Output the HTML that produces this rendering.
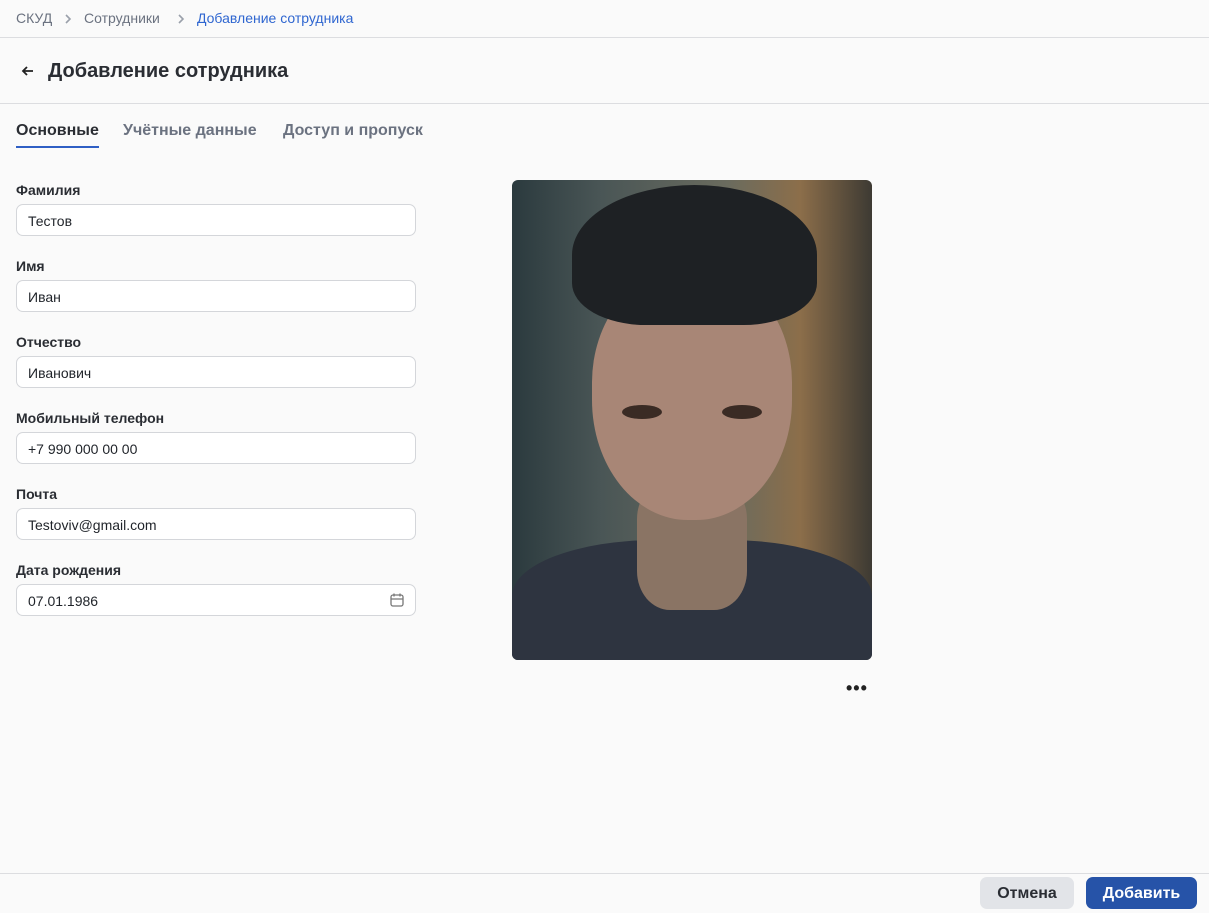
<!DOCTYPE html>
<html><head><meta charset="utf-8"><style>
*{box-sizing:border-box;margin:0;padding:0}
body{width:1209px;height:913px;background:#fafafa;font-family:"Liberation Sans","DejaVu Sans",sans-serif;position:relative;overflow:hidden;color:#1f2329}
.bc{position:absolute;top:10px;font-size:14px;color:#6b7280}
.hl{position:absolute;left:0;right:0;height:1px;background:#dcdde0}
h1{position:absolute;top:60px;left:48px;font-size:20px;font-weight:bold;color:#2a2d33}
.back{position:absolute;top:63px;left:20px}
.tab{position:absolute;top:122px;font-size:16px;font-weight:bold;color:#6b7280}
.lbl{position:absolute;left:16px;font-size:14px;font-weight:bold;color:#2a2d33}
.inp{position:absolute;left:16px;width:400px;height:32px;border:1px solid #d4d6da;border-radius:7px;background:#fff;font-size:14px;padding:8px 11px;color:#1f2329}
.photo{position:absolute;left:512px;top:180px;width:360px;height:480px;border-radius:6px;overflow:hidden;background:linear-gradient(90deg,#2b3a3e 0%,#4a5656 25%,#6a6b5e 60%,#8c6e4a 80%,#3d3a33 100%)}
.btn{position:absolute;top:877px;height:32px;border-radius:7px;font-size:16px;font-weight:bold;text-align:center;line-height:33px}
</style></head><body>
<div class="bc" style="left:16px">СКУД</div>
<svg style="position:absolute;left:63px;top:13px" width="10" height="12" viewBox="0 0 10 12"><path d="M3 2l4 4-4 4" stroke="#9aa0aa" stroke-width="1.6" fill="none"/></svg>
<div class="bc" style="left:84px">Сотрудники</div>
<svg style="position:absolute;left:176px;top:13px" width="10" height="12" viewBox="0 0 10 12"><path d="M3 2l4 4-4 4" stroke="#9aa0aa" stroke-width="1.6" fill="none"/></svg>
<div class="bc" style="left:197px;color:#2f66d0">Добавление сотрудника</div>
<div class="hl" style="top:37px"></div>
<svg class="back" width="16" height="16" viewBox="0 0 16 16"><path d="M13 8H3M7 4L3 8l4 4" stroke="#222" stroke-width="1.8" fill="none"/></svg>
<h1>Добавление сотрудника</h1>
<div class="hl" style="top:103px"></div>
<div class="tab" style="left:16px;color:#2a2d33">Основные</div>
<div style="position:absolute;left:16px;top:146px;width:83px;height:2px;background:#2f5fc4"></div>
<div class="tab" style="left:123px">Учётные данные</div>
<div class="tab" style="left:283px">Доступ и пропуск</div>

<div class="lbl" style="top:182px">Фамилия</div><div class="inp" style="top:204px">Тестов</div>
<div class="lbl" style="top:258px">Имя</div><div class="inp" style="top:280px">Иван</div>
<div class="lbl" style="top:334px">Отчество</div><div class="inp" style="top:356px">Иванович</div>
<div class="lbl" style="top:410px">Мобильный телефон</div><div class="inp" style="top:432px">+7 990 000 00 00</div>
<div class="lbl" style="top:486px">Почта</div><div class="inp" style="top:508px">Testoviv@gmail.com</div>
<div class="lbl" style="top:562px">Дата рождения</div><div class="inp" style="top:584px">07.01.1986
<svg style="position:absolute;right:10px;top:7px" width="16" height="16" viewBox="0 0 16 16"><rect x="2" y="3" width="12" height="11" rx="2" stroke="#777" stroke-width="1.3" fill="none"/><path d="M2 7h12M5 1.5v3M11 1.5v3" stroke="#777" stroke-width="1.3"/></svg></div>

<div class="photo">
<div style="position:absolute;left:0;top:360px;width:360px;height:140px;background:#2e3440;border-radius:40% 40% 0 0"></div>
<div style="position:absolute;left:125px;top:300px;width:110px;height:130px;background:#8a7464;border-radius:30%"></div>
<div style="position:absolute;left:80px;top:90px;width:200px;height:250px;background:#a88676;border-radius:45% 45% 48% 48%"></div>
<div style="position:absolute;left:60px;top:5px;width:245px;height:140px;background:#1e2124;border-radius:50% 50% 30% 30%"></div>
<div style="position:absolute;left:110px;top:225px;width:40px;height:14px;background:#3a2b24;border-radius:50%"></div>
<div style="position:absolute;left:210px;top:225px;width:40px;height:14px;background:#3a2b24;border-radius:50%"></div>
</div>
<div style="position:absolute;left:846px;top:678px;font-size:18px;font-weight:bold;letter-spacing:1px;color:#222">•••</div>
<div class="hl" style="top:873px"></div>
<div class="btn" style="left:980px;width:94px;background:#e2e4e8;color:#2a2d33">Отмена</div>
<div class="btn" style="left:1086px;width:111px;background:#2653a8;color:#fff">Добавить</div>
</body></html>
